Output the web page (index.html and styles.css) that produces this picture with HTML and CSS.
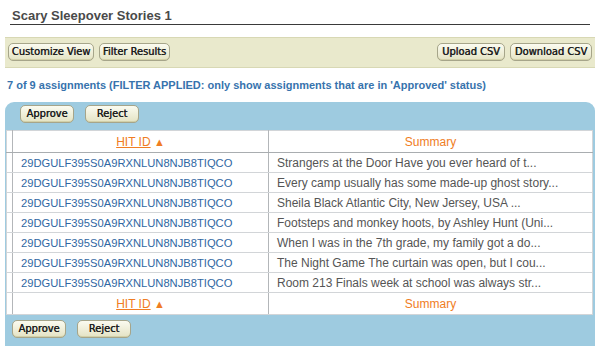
FILE: index.html
```html
<!DOCTYPE html>
<html lang="en">
  <head>
    <meta charset="UTF-8" />
    <title>Scary Sleepover Stories 1</title>
    <link rel="stylesheet" href="styles.css">
  </head>
  <body>
    <div class="page">
      <h2 class="title">Scary Sleepover Stories 1</h2>

      <div class="toolbar">
        <div class="group">
          <button class="btn customize">Customize View</button>
          <button class="btn filter">Filter Results</button>
        </div>
        <div class="group">
          <button class="btn upload">Upload CSV</button>
          <button class="btn download">Download CSV</button>
        </div>
      </div>

      <p class="info">7 of 9 assignments (FILTER APPLIED: only show assignments that are in 'Approved' status)</p>

      <div class="panel">
        <div class="actions">
          <button class="btn wide">Approve</button>
          <button class="btn wide">Reject</button>
        </div>
        <table class="results">
          <thead>
            <tr>
              <th class="check"></th>
              <th class="hit"><a href="#">HIT ID</a> <span class="arrow">&#9650;</span></th>
              <th>Summary</th>
            </tr>
          </thead>
          <tbody>
            <tr><td class="check"></td><td class="id"><a href="#">29DGULF395S0A9RXNLUN8NJB8TIQCO</a></td><td>Strangers at the Door Have you ever heard of t...</td></tr>
            <tr><td class="check"></td><td class="id"><a href="#">29DGULF395S0A9RXNLUN8NJB8TIQCO</a></td><td>Every camp usually has some made-up ghost story...</td></tr>
            <tr><td class="check"></td><td class="id"><a href="#">29DGULF395S0A9RXNLUN8NJB8TIQCO</a></td><td>Sheila Black Atlantic City, New Jersey, USA ...</td></tr>
            <tr><td class="check"></td><td class="id"><a href="#">29DGULF395S0A9RXNLUN8NJB8TIQCO</a></td><td>Footsteps and monkey hoots, by Ashley Hunt (Uni...</td></tr>
            <tr><td class="check"></td><td class="id"><a href="#">29DGULF395S0A9RXNLUN8NJB8TIQCO</a></td><td>When I was in the 7th grade, my family got a do...</td></tr>
            <tr><td class="check"></td><td class="id"><a href="#">29DGULF395S0A9RXNLUN8NJB8TIQCO</a></td><td>The Night Game The curtain was open, but I cou...</td></tr>
            <tr><td class="check"></td><td class="id"><a href="#">29DGULF395S0A9RXNLUN8NJB8TIQCO</a></td><td>Room 213 Finals week at school was always str...</td></tr>
          </tbody>
          <tfoot>
            <tr>
              <th class="check"></th>
              <th class="hit"><a href="#">HIT ID</a> <span class="arrow">&#9650;</span></th>
              <th>Summary</th>
            </tr>
          </tfoot>
        </table>
        <div class="actions bottom">
          <button class="btn wide">Approve</button>
          <button class="btn wide">Reject</button>
        </div>
      </div>
    </div>
  </body>
</html>
```
FILE: styles.css
```css
body {
  margin: 0;
  font-family: "Liberation Sans", Arial, sans-serif;
  background: #ffffff;
}
.page {
  padding: 0 5px;
}
.title {
  margin: 0 5px;
  padding: 8px 2px 1px;
  font-size: 13px;
  line-height: 15px;
  font-weight: bold;
  color: #4a4a4a;
  border-bottom: 1px solid #3a3a3a;
}
.toolbar {
  display: flex;
  justify-content: space-between;
  margin-top: 12px;
  padding: 5px 3px 6px;
  background: #e9e9cc;
  border-top: 1px solid #d8d8b4;
  border-bottom: 1px solid #d8d8b4;
}
.group {
  display: flex;
  gap: 5px;
}
.btn {
  font-family: "DejaVu Sans Condensed", "DejaVu Sans", sans-serif;
  font-size: 11px;
  font-weight: normal;
  color: #1e1e1e;
  text-shadow: 0.4px 0 0 #1e1e1e;
  padding: 0;
  height: 18px;
  line-height: 16px;
  border: 1px solid #a6a58a;
  border-radius: 5px;
  background: linear-gradient(#fbfbf0, #e4e3c4);
  box-shadow: inset 0 -1px 0 #d2d0a8;
  cursor: pointer;
}
.btn.customize {
  width: 86px;
}
.btn.filter {
  width: 71px;
}
.btn.upload {
  width: 68px;
}
.btn.download {
  width: 82px;
}
.btn.wide {
  width: 54px;
}
.info {
  margin: 11px 2px 0;
  font-size: 11px;
  line-height: 13px;
  font-weight: bold;
  color: #3773ad;
}
.panel {
  margin-top: 10px;
  background: #9ecbe0;
  border-radius: 9px 9px 0 0;
  padding: 3px 2px 8px 1px;
}
.actions {
  display: flex;
  gap: 11px;
  padding: 0 0 7px 14px;
}
.actions.bottom {
  padding: 5px 0 0 6px;
}
.results {
  width: 100%;
  border-collapse: collapse;
  background: #ffffff;
  border: 1px solid #8d9499;
  font-size: 12px;
}
.results td,
.results th {
  height: 19px;
  padding: 0 8px;
  border: 1px solid #d2d5d8;
  text-align: left;
  font-weight: normal;
  color: #555;
  white-space: nowrap;
}
.results th {
  text-align: center;
  color: #f07d23;
  height: 21px;
}
.results thead th {
  border-bottom: 1px solid #a9adb0;
}
.results .check {
  width: 5px;
  padding: 0;
  border-right-color: #b3b6b9;
}
.results th.hit {
  width: 239px;
  border-right-color: #b3b6b9;
}
.results td.id {
  border-right-color: #b3b6b9;
  font-size: 11.2px;
}
.results a {
  color: #2f67a3;
  text-decoration: none;
}
.results th a {
  color: #f07d23;
  text-decoration: underline;
}
.arrow {
  font-size: 11px;
  color: #f07d23;
}
```
